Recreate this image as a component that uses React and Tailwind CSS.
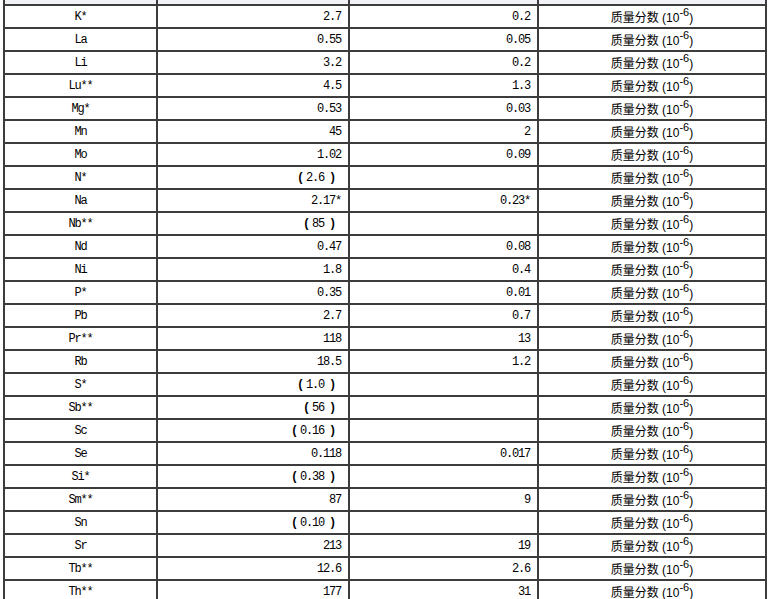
import React from "react";

const rows = [
  ["K*", "2.7", "0.2"],
  ["La", "0.55", "0.05"],
  ["Li", "3.2", "0.2"],
  ["Lu**", "4.5", "1.3"],
  ["Mg*", "0.53", "0.03"],
  ["Mn", "45", "2"],
  ["Mo", "1.02", "0.09"],
  ["N*", "(2.6)", ""],
  ["Na", "2.17*", "0.23*"],
  ["Nb**", "(85)", ""],
  ["Nd", "0.47", "0.08"],
  ["Ni", "1.8", "0.4"],
  ["P*", "0.35", "0.01"],
  ["Pb", "2.7", "0.7"],
  ["Pr**", "118", "13"],
  ["Rb", "18.5", "1.2"],
  ["S*", "(1.0)", ""],
  ["Sb**", "(56)", ""],
  ["Sc", "(0.16)", ""],
  ["Se", "0.118", "0.017"],
  ["Si*", "(0.38)", ""],
  ["Sm**", "87", "9"],
  ["Sn", "(0.10)", ""],
  ["Sr", "213", "19"],
  ["Tb**", "12.6", "2.6"],
  ["Th**", "177", "31"],
];

const mono = { fontFamily: '"Liberation Mono", "Noto Sans CJK SC", monospace' };
const cjk = { fontFamily: '"Liberation Sans", "Noto Sans CJK SC", sans-serif' };

function Val({ v }) {
  if (v.startsWith("(")) {
    const inner = v.slice(1, -1);
    return (
      <span>
        <span className="mr-[3px] font-bold">(</span>
        {inner}
        <span className="ml-[5px] mr-[6px] font-bold">)</span>
      </span>
    );
  }
  return <span>{v}</span>;
}

export default function App() {
  return (
    <div className="h-[599px] w-[769px] overflow-hidden bg-white">
      <div className="ml-[3px] mt-[-17px] grid w-[764px] grid-cols-[151px_190px_187px_226px] gap-[2px] bg-[#3c3c3c] px-[2px] text-[12px] text-black">
        <div className="h-[21px] bg-[#f1f3f6]" />
        <div className="h-[21px] bg-[#f1f3f6]" />
        <div className="h-[21px] bg-[#f1f3f6]" />
        <div className="h-[21px] bg-[#f1f3f6]" />
        {rows.map(([el, v1, v2], i) => (
          <React.Fragment key={i}>
            <div className="flex h-[21px] items-center justify-center bg-white tracking-[-1.2px]" style={mono}>
              {el}
            </div>
            <div className="flex h-[21px] items-center justify-end bg-white pr-[7px] tracking-[-1.2px]" style={mono}>
              <Val v={v1} />
            </div>
            <div className="flex h-[21px] items-center justify-end bg-white pr-[7px] tracking-[-1.2px]" style={mono}>
              <Val v={v2} />
            </div>
            <div className="flex h-[21px] items-center justify-center bg-white pt-[3px]" style={cjk}>
              <span>
                质量分数 (10<sup className="relative top-[-0.55em] text-[11px]">-6</sup>)
              </span>
            </div>
          </React.Fragment>
        ))}
      </div>
    </div>
  );
}
